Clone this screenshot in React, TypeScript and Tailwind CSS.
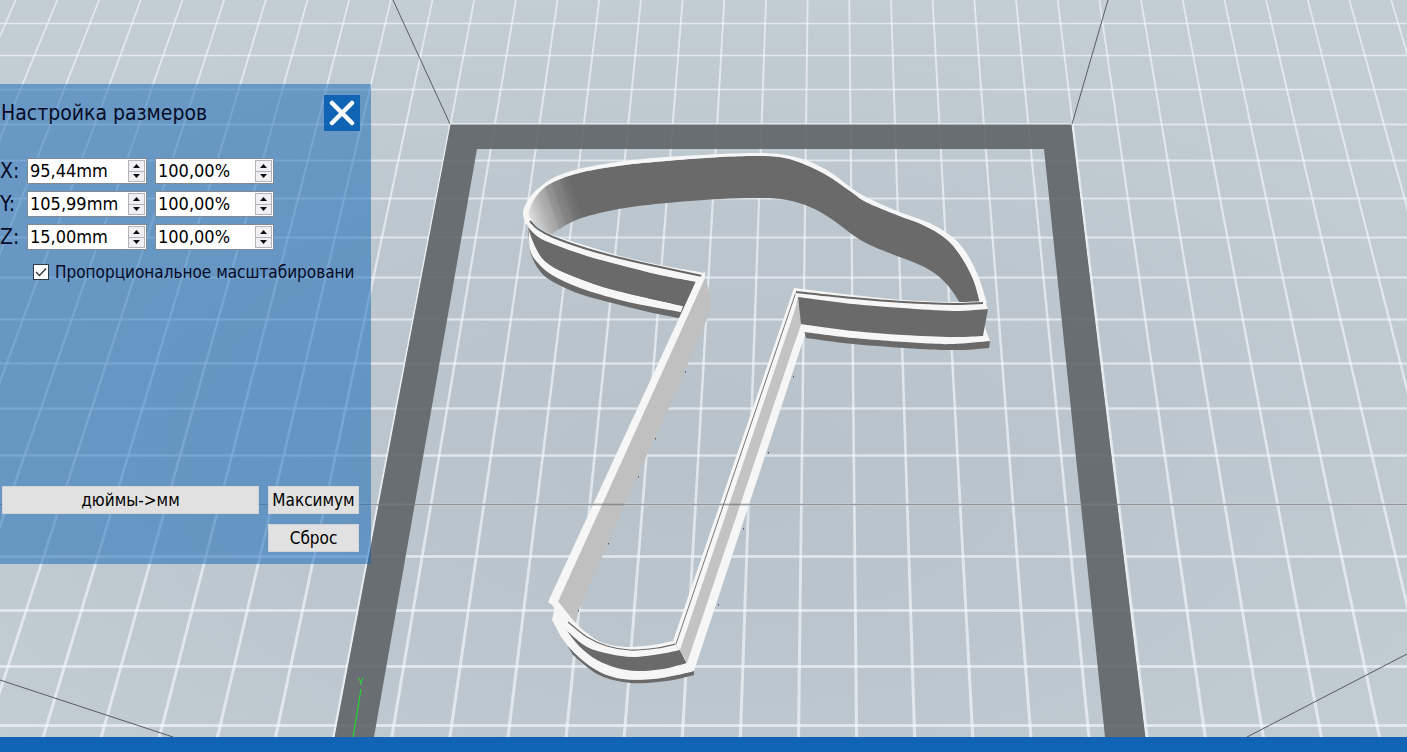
import { useState } from 'react'
import { clsx } from 'clsx'

type Point = [number, number]

const FLOOR = 737
const gridRows = [-8, 23, 55, 89, 124, 160, 198, 237, 277, 319, 363, 408, 455, 504, 556, 610, 666, 725]
const gridColumns = Array.from({ length: 58 }, (_, i) => i - 12)

// Smooth run through the points, without the opening move command
function run(points: Point[]) {
  let d = `${points[0][0]} ${points[0][1]}`
  for (let i = 0; i < points.length - 1; i++) {
    const a = points[i - 1] ?? points[i]
    const b = points[i]
    const c = points[i + 1]
    const e = points[i + 2] ?? c
    d += ` C${b[0] + (c[0] - a[0]) / 6} ${b[1] + (c[1] - a[1]) / 6} ${c[0] - (e[0] - b[0]) / 6} ${c[1] - (e[1] - b[1]) / 6} ${c[0]} ${c[1]}`
  }
  return d
}

// Closed shape: smooth edges joined by straight lines
function shape(...edges: Point[][]) {
  return `M${edges.map(run).join(' L')} Z`
}

const capOuter: Point[] = [[526, 224], [523, 212], [530, 197], [540, 187], [555, 177], [575, 170], [598, 165], [625, 161], [660, 157.5], [720, 154], [760, 153], [785, 155], [808, 161], [830, 172], [850, 187], [866, 197], [897, 211], [927, 222], [947, 233], [963, 248], [977, 273], [987, 303]]
const capInner: Point[] = [[980, 303], [973, 279], [960, 255], [945, 238], [923, 225], [897, 215], [866, 202], [850, 191], [828, 176], [806, 165], [785, 158], [760, 156], [720, 157], [660, 161.5], [625, 165], [598, 169], [575, 174], [558, 180], [545, 187], [535, 198], [529, 212], [530, 219]]
const capLower: Point[] = [[550, 235], [568, 224], [588, 216], [625, 208], [667, 203], [720, 199], [760, 198], [787, 200], [810, 207], [830, 218], [853, 235], [870, 245], [897, 256], [920, 265], [937, 275], [950, 288], [960, 303]]

const leftRimTop: Point[] = [[529, 216], [538, 227], [553, 235], [587, 246], [620, 256], [660, 265], [705, 273]]
const leftGroove: Point[] = [[530, 221], [538, 229], [553, 237], [587, 249], [620, 258], [660, 267], [702, 276]]
const leftRimBottom: Point[] = [[697, 282], [660, 275], [620, 265], [587, 256], [553, 244], [537, 236], [525, 222]]
const leftFaceTop: Point[] = [[528, 228], [537, 236], [553, 244], [587, 256], [620, 265], [660, 275], [697, 282]]
const leftFaceBottom: Point[] = [[683, 306], [643, 297], [603, 287], [563, 272], [545, 261], [536, 248], [528, 228]]
const leftBaseBottom: Point[] = [[681, 312], [653, 307], [620, 300], [580, 288], [552, 275], [537, 262], [530, 250], [529, 234]]
const leftShadow: Point[] = [[679, 318], [653, 313], [620, 305], [580, 294], [550, 280], [537, 267], [530, 252]]

const rightRimTop: Point[] = [[794, 288], [853, 295], [903, 300], [953, 302], [985, 301]]
const rightGroove: Point[] = [[796, 292], [853, 298], [903, 302], [953, 304], [983, 303]]
const rightFaceTop: Point[] = [[798, 297], [853, 304], [903, 308], [953, 311], [988, 309]]
const rightFaceBottom: Point[] = [[983, 336], [953, 337], [903, 335], [853, 331], [800, 324]]
const rightBaseBottom: Point[] = [[990, 341], [953, 344], [920, 343], [853, 338], [804, 332]]
const rightShadow: Point[] = [[989, 348], [960, 350], [920, 349], [853, 344], [806, 338]]

const footInner: Point[] = [[673, 641], [653, 645], [627, 647], [603, 643], [587, 633], [575, 622], [557, 600]]
const footGroove: Point[] = [[568, 622], [587, 637], [607, 646], [630, 650], [657, 648], [676, 644]]
const footFaceTop: Point[] = [[567, 631], [587, 647], [610, 654], [633, 657], [660, 654], [680, 650]]
const footFaceBottom: Point[] = [[687, 663], [663, 669], [637, 671], [617, 668], [597, 660], [580, 647], [567, 631]]
const footBase: Point[] = [[552, 620], [563, 640], [580, 658], [600, 672], [623, 679], [653, 679], [677, 675], [694, 671]]
const footShadow: Point[] = [[694, 675], [673, 680], [647, 683], [623, 682], [597, 674], [573, 655]]

const specks: Point[] = [[685, 371], [655, 438], [638, 476], [608, 543], [578, 610], [793, 376], [768, 452], [743, 528], [718, 604]]

function Grid() {
  return (
    <g fill="#f3f8fc" fillOpacity="0.66">
      {gridRows.map((y) => {
        const h = 1.5 + y / 480
        return <rect key={y} x="-400" y={y - h / 2 + 0.5} width="2200" height={h} />
      })}
      {gridColumns.map((n) => {
        const top = 15.7 + n * 41.68
        const bottom = 333.7 + (n - 11) * 58.1
        return (
          <polygon
            key={n}
            points={`${top - 0.9},0 ${top + 0.9},0 ${bottom + 1.6},${FLOOR} ${bottom - 1.6},${FLOOR}`}
          />
        )
      })}
    </g>
  )
}

function Cutter() {
  return (
    <g>
      {/* cap */}
      <path d={shape(capInner, capLower)} fill="url(#bend)" />
      <path d={shape(capOuter, capInner)} fill="#f6f6f6" />
      <path d={shape(leftFaceTop, leftShadow)} fill="#696969" />
      <path d={shape(leftBaseBottom, [...leftFaceBottom].reverse())} fill="#f6f6f6" />
      <path d={shape(leftFaceTop, leftFaceBottom)} fill="#6a6a6a" />
      <path d={shape(leftRimTop, leftRimBottom)} fill="#f6f6f6" />
      <path d={`M${run(leftGroove)}`} fill="none" stroke="#666" strokeWidth="2" />

      {/* left side of the stem */}
      <polygon points="704,275 709,290 710,312 698,340 668,410 625,503 602,557 580,607 575,624 556,601" fill="#c0c0c0" />
      <polygon points="705,272 696,281 681,314 548,602 557,604 705,278" fill="#f6f6f6" />

      {/* foot */}
      <path d={shape(footBase, footShadow)} fill="#6a6a6a" />
      <path d={shape(footInner, [[548, 602], [554, 608], [552, 620]], footBase)} fill="#f6f6f6" />
      <path d={shape(footFaceTop, footFaceBottom)} fill="#6a6a6a" />
      <path d={`M${run(footGroove)}`} fill="none" stroke="#6a6a6a" strokeWidth="1.2" />

      {/* right side of the stem */}
      <polygon points="794,288 804,296 806,332 694,671 687,664 680,650 673,641" fill="#f6f6f6" />
      <polygon points="799,298 801,324 687,663 680,650" fill="#c3c3c3" />
      <path d="M796 292 676 644" stroke="#777" strokeWidth="1" />

      <path d={shape([[804, 330], [853, 336], [990, 341]], rightShadow)} fill="#6a6a6a" />
      <path d={shape(rightRimTop, [[988, 309], [985, 325], [990, 341]], rightBaseBottom)} fill="#f6f6f6" />
      <path d={shape(rightFaceTop, rightFaceBottom)} fill="#6a6a6a" />
      <polygon points="798,297 801,324 795,342 788,338" fill="#c3c3c3" />
      <path d={`M${run(rightGroove)}`} fill="none" stroke="#666" strokeWidth="2" />

      {specks.map(([x, y]) => (
        <rect key={`${x}-${y}`} x={x} y={y} width="1" height="1.5" fill="#5b5068" />
      ))}
    </g>
  )
}

function Scene() {
  return (
    <svg
      className="absolute inset-0 h-full w-full"
      viewBox="0 0 1407 737"
      preserveAspectRatio="xMidYMid slice"
      role="img"
      aria-label="3D"
    >
      <defs>
        <radialGradient id="floor" cx="0.5" cy="0.62" r="0.65">
          <stop offset="0" stopColor="#b7c2ca" />
          <stop offset="0.5" stopColor="#bbc6ce" />
          <stop offset="1" stopColor="#c3cdd4" />
        </radialGradient>
        <linearGradient id="bend" gradientUnits="userSpaceOnUse" x1="530" y1="214" x2="577" y2="198">
          <stop offset="0" stopColor="#dcdcdc" />
          <stop offset="0.15" stopColor="#c4c4c4" />
          <stop offset="0.3" stopColor="#b0b0b0" />
          <stop offset="0.45" stopColor="#a2a2a2" />
          <stop offset="0.47" stopColor="#979797" />
          <stop offset="0.6" stopColor="#8e8e8e" />
          <stop offset="0.62" stopColor="#858585" />
          <stop offset="0.78" stopColor="#7d7d7d" />
          <stop offset="0.8" stopColor="#767676" />
          <stop offset="1" stopColor="#6a6a6a" />
        </linearGradient>
      </defs>
      <rect width="1407" height="737" fill="url(#floor)" />
      <Grid />

      {/* bed frame */}
      <path
        d="M450 124H1072L1146 737H334Z M477 149L374 737H1105L1044 149Z"
        fill="#5f6468"
        fillOpacity="0.9"
        fillRule="evenodd"
      />
      <path d="M334 737 450 124H1072L1146 737" fill="none" stroke="#f3f7fa" strokeWidth="1" />
      <path d="M393 0 450 124M1108 0 1072 124M0 680 173 737M1407 654 1247 737" stroke="#575c61" strokeWidth="1" />

      <Cutter />
      <path d="M0 504.5H1407" stroke="#777a7d" strokeOpacity="0.75" strokeWidth="1.5" />

      {/* y axis */}
      <path d="M361 689 353 737" stroke="#25d62f" strokeWidth="1.2" />
      <text x="358" y="685" fill="#25d62f" fontSize="12" fontFamily="Noto Sans, sans-serif">
        ʏ
      </text>
    </svg>
  )
}

function SpinBox({ label, initial, suffix, className }: { label: string; initial: number; suffix: string; className?: string }) {
  const format = (n: number) => n.toFixed(2).replace('.', ',') + suffix
  const [text, setText] = useState(format(initial))
  const step = (by: number) => setText((t) => format((parseFloat(t.replace(',', '.')) || 0) + by))

  return (
    <div className={clsx('flex h-[26px] border border-[#7f8a94] bg-white p-px', className)}>
      <input
        aria-label={label}
        value={text}
        onChange={(e) => setText(e.target.value)}
        className="w-0 min-w-0 flex-1 bg-transparent pl-px text-[18px] leading-[22px] text-black outline-none"
      />
      <div className="flex w-[17px] flex-col">
        <button
          type="button"
          aria-label={`${label} +`}
          onClick={() => step(1)}
          className="flex flex-1 items-center justify-center border border-[#b4b4b8] bg-[#f0f0f2]"
        >
          <svg width="7" height="4" viewBox="0 0 7 4">
            <path d="M0 4 3.500 0 7 4Z" fill="#111" />
          </svg>
        </button>
        <button
          type="button"
          aria-label={`${label} −`}
          onClick={() => step(-1)}
          className="flex flex-1 items-center justify-center border border-t-0 border-[#b4b4b8] bg-[#f0f0f2]"
        >
          <svg width="7" height="4" viewBox="0 0 7 4">
            <path d="M0 0H7L3.500 4Z" fill="#111" />
          </svg>
        </button>
      </div>
    </div>
  )
}

const axes = [
  { name: 'X', size: 95.44 },
  { name: 'Y', size: 105.99 },
  { name: 'Z', size: 15 },
]

const buttonStyle = 'h-7 border border-[#d2d4d8] bg-[#e1e1e1] text-[17px] leading-6 text-black'

function SizePanel() {
  const [proportional, setProportional] = useState(true)

  return (
    <section className="absolute top-[84px] left-0 flex h-[480px] w-[371px] flex-col bg-[#1064b6]/50 pr-3 pb-3 text-[#060b26]">
      <header className="flex items-center justify-between pt-[11px] pl-px">
        <h1 className="text-[21px] leading-9">Настройка размеров</h1>
        <button type="button" aria-label="Закрыть" className="-mr-px flex size-9 items-center justify-center bg-[#1163b3]">
          <svg width="26" height="26" viewBox="0 0 26 26" stroke="#f8fbfe" strokeWidth="4.500" strokeLinecap="round">
            <path d="M3 3 23 23M23 3 3 23" />
          </svg>
        </button>
      </header>

      <div className="mt-[27px] flex flex-col gap-[7px]">
        {axes.map((axis) => (
          <div key={axis.name} className="flex items-center">
            <span className="w-[27px] text-[21px] leading-6">{axis.name}:</span>
            <SpinBox label={`${axis.name} mm`} initial={axis.size} suffix="mm" className="w-[120px]" />
            <SpinBox label={`${axis.name} %`} initial={100} suffix="%" className="ml-2 w-[119px]" />
          </div>
        ))}
      </div>

      <label className="mt-2 ml-[33px] flex items-center text-[17px] leading-7 whitespace-nowrap">
        <span className="relative mr-1.5 size-4 shrink-0">
          <input
            type="checkbox"
            checked={proportional}
            onChange={(e) => setProportional(e.target.checked)}
            className="block size-4 appearance-none border border-[#2c3a4a] bg-white"
          />
          {proportional ? (
            <svg className="pointer-events-none absolute inset-0" width="16" height="16" viewBox="0 0 16 16" fill="none">
              <path d="M3 8 6.500 11.500 13 4.500" stroke="#333" strokeWidth="1.300" />
            </svg>
          ) : null}
        </span>
        Пропорциональное масштабировани
      </label>

      <div className="mt-auto grid grid-cols-[1fr_91px] gap-x-[9px] gap-y-2.5 pl-0.5">
        <button type="button" className={buttonStyle}>
          дюймы-&gt;мм
        </button>
        <button type="button" className={buttonStyle}>
          Максимум
        </button>
        <button type="button" className={clsx(buttonStyle, 'col-start-2')}>
          Сброс
        </button>
      </div>
    </section>
  )
}

export default function App() {
  return (
    <div className="flex h-screen flex-col overflow-hidden font-['DejaVu_Sans_Condensed','Noto_Sans',sans-serif]">
      <main className="relative min-h-0 flex-1 overflow-hidden bg-[#bfc9d1]">
        <Scene />
        <SizePanel />
      </main>
      <footer className="h-[15px] shrink-0 bg-[#1163b6]" />
    </div>
  )
}
